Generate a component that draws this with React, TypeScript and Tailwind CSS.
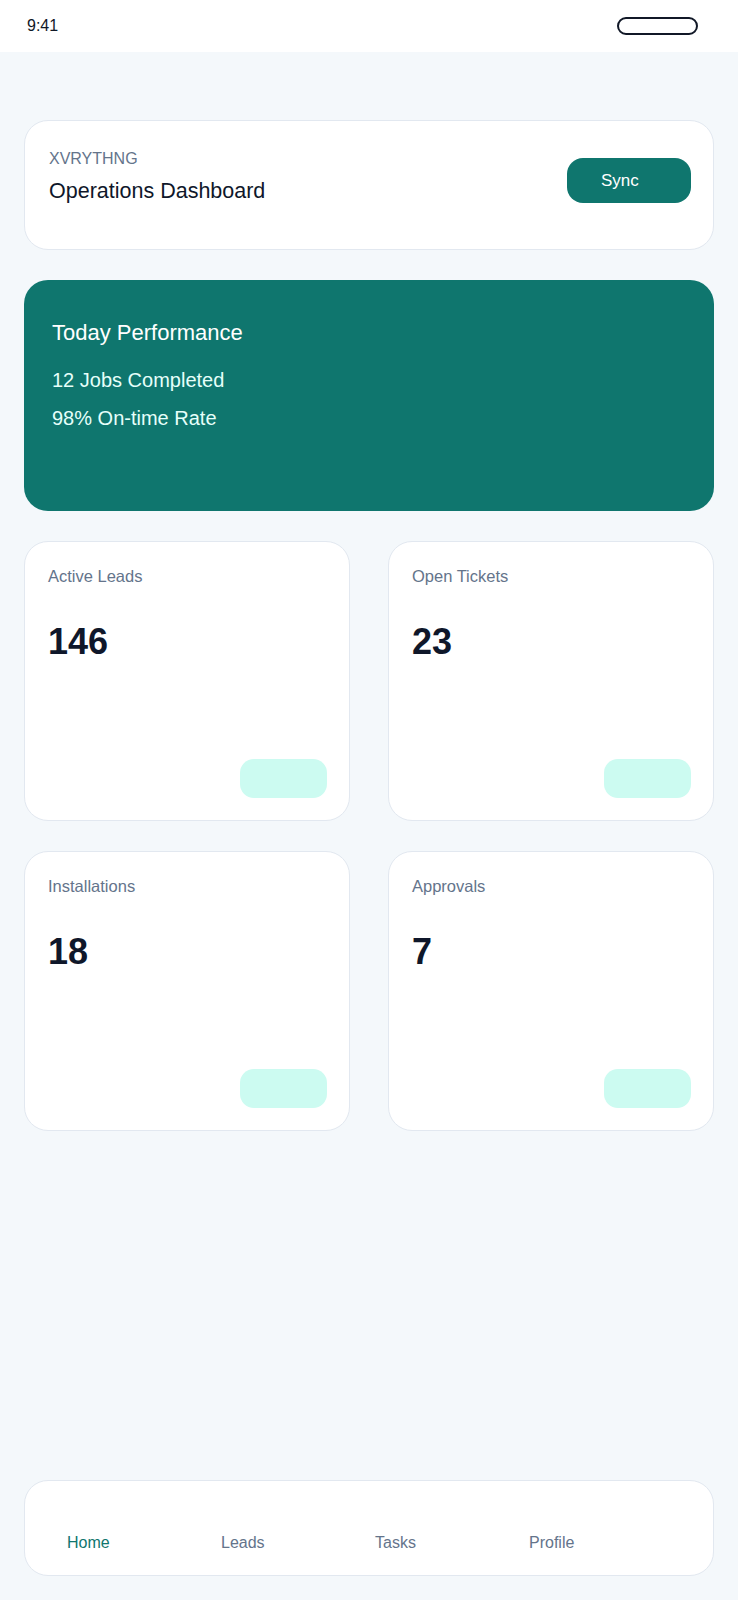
import React from 'react';

interface Stat {
  label: string;
  value: string;
}

const stats: Stat[] = [
  { label: 'Active Leads', value: '146' },
  { label: 'Open Tickets', value: '23' },
  { label: 'Installations', value: '18' },
  { label: 'Approvals', value: '7' },
];

const tabs = ['Home', 'Leads', 'Tasks', 'Profile'];

export default function App() {
  return (
    <div
      className="flex h-screen flex-col bg-[#f4f8fb]"
      style={{ fontFamily: '"Liberation Sans", Arial, sans-serif' }}
    >
      {/* Status bar */}
      <div className="flex h-[52px] shrink-0 items-center justify-between bg-white pl-[27px] pr-[40px]">
        <span className="text-[16px] leading-none text-[#111827]">9:41</span>
        <div className="h-[18px] w-[81px] rounded-full border-2 border-[#111827]" />
      </div>

      <main className="flex flex-1 flex-col gap-[30px] px-6 pt-[68px]">
        {/* Header */}
        <div className="flex h-[130px] items-start justify-between rounded-3xl border border-[#e2e8f0] bg-white pl-6 pr-[22px] pt-[26px]">
          <div className="flex flex-col gap-[6px]">
            <span className="text-[16px] leading-6 text-[#64748b]">XVRYTHNG</span>
            <span className="text-[21.5px] leading-7 text-[#0f172a]">Operations Dashboard</span>
          </div>
          <button className="mt-[11px] h-[45px] w-[124px] rounded-2xl bg-[#0f766e] pl-[34px] text-left text-[17px] text-white">
            Sync
          </button>
        </div>

        {/* Today performance */}
        <div className="flex h-[231px] flex-col rounded-3xl bg-[#0f766e] px-7 pt-[39px]">
          <span className="text-[22px] leading-7 text-white">Today Performance</span>
          <span className="mt-[19px] text-[20px] leading-7 text-[#e6fffa]">12 Jobs Completed</span>
          <span className="mt-[10px] text-[20px] leading-7 text-[#e6fffa]">98% On-time Rate</span>
        </div>

        {/* Stats */}
        <div className="grid grid-cols-2 gap-x-[38px] gap-y-[30px]">
          {stats.map((s) => (
            <div
              key={s.label}
              className="flex h-[280px] flex-col rounded-3xl border border-[#e2e8f0] bg-white pl-[23px] pr-[22px] pt-[22px] pb-[22px]"
            >
              <span className="text-[16.5px] leading-6 text-[#64748b]">{s.label}</span>
              <span className="mt-[34px] text-[36px] font-bold leading-10 text-[#0f172a]">{s.value}</span>
              <div className="mt-auto h-[39px] w-[87px] self-end rounded-[14px] bg-[#ccfbf1]" />
            </div>
          ))}
        </div>
      </main>

      {/* Bottom nav */}
      <nav className="mx-6 mb-6 flex h-[96px] shrink-0 rounded-3xl border border-[#e2e8f0] bg-white pl-[42px] pt-[50px]">
        {tabs.map((t, i) => (
          <span
            key={t}
            className={`w-[154px] text-[16px] leading-6 ${i === 0 ? 'text-[#0f766e]' : 'text-[#64748b]'}`}
          >
            {t}
          </span>
        ))}
      </nav>
    </div>
  );
}
